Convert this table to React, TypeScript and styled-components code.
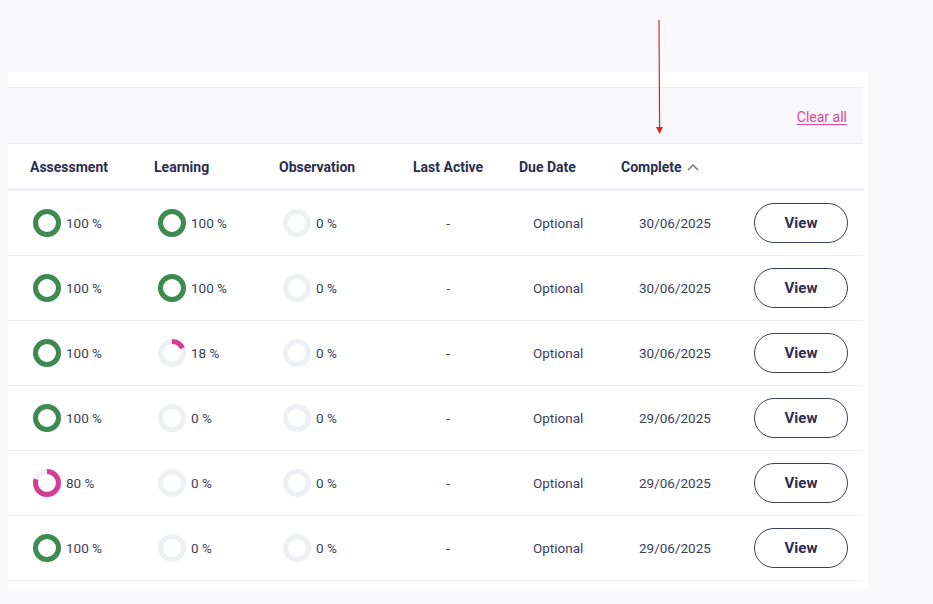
import React from "react";
import styled, { createGlobalStyle } from "styled-components";

const GlobalStyle = createGlobalStyle`
  html, body { margin: 0; padding: 0; }
  body {
    background: #fafafc;
    font-family: Roboto, "Liberation Sans", sans-serif;
    color: #2b2d52;
  }
`;

const Page = styled.div`
  position: relative;
  padding: 72px 0 0 8px;
  min-height: 604px;
  box-sizing: border-box;
`;

const Card = styled.div`
  width: 860px;
  background: #ffffff;
  padding: 15px 5px 8px 0;
  box-sizing: border-box;
`;

const FilterBar = styled.div`
  height: 57px;
  box-sizing: border-box;
  background: #f8f8fa;
  border-top: 1px solid #ececf0;
  border-bottom: 1px solid #ececf0;
  display: flex;
  align-items: center;
  justify-content: flex-end;
  padding: 2px 16px 0 0;
`;

const ClearAll = styled.a`
  color: #e0449a;
  font-size: 14px;
  text-decoration: underline;
  text-underline-offset: 2px;
  cursor: pointer;
`;

const cols = "124px 125px 134px 106px 102px 132px 132px";

const HeaderRow = styled.div`
  display: grid;
  grid-template-columns: ${cols};
  height: 47px;
  box-sizing: border-box;
  border-bottom: 3px solid #eef0f4;
  align-items: center;
  padding-top: 1px;
`;

const HeadCell = styled.div<{ $pl: number }>`
  padding-left: ${(p) => p.$pl}px;
  font-size: 14px;
  font-weight: 700;
  color: #2b2d52;
  display: flex;
  align-items: center;
  gap: 5px;
  white-space: nowrap;
`;

const Row = styled.div`
  display: grid;
  grid-template-columns: ${cols};
  height: 65px;
  box-sizing: border-box;
  border-bottom: 1px solid #ececf0;
  align-items: center;
`;

const Cell = styled.div<{ $pl: number }>`
  padding-left: ${(p) => p.$pl}px;
  font-size: 13.5px;
  color: #3b3d5c;
  display: flex;
  align-items: center;
  gap: 5px;
  white-space: nowrap;
`;

const CenterCell = styled(Cell)`
  justify-content: center;
`;

const ViewButton = styled.button`
  width: 94px;
  height: 40px;
  border: 1px solid #3b3d5c;
  border-radius: 20px;
  background: #fff;
  font-family: Roboto, "Liberation Sans", sans-serif;
  font-size: 15px;
  font-weight: 700;
  color: #2b2d52;
  cursor: pointer;
`;

const ArrowSvg = styled.svg`
  position: absolute;
  left: 652px;
  top: 18px;
`;

const Ring: React.FC<{ pct: number }> = ({ pct }) => {
  const r = 11.5;
  const c = 2 * Math.PI * r;
  const color = pct >= 100 ? "#3d8a52" : "#d63c96";
  return (
    <svg width="28" height="28" viewBox="0 0 28 28">
      <circle cx="14" cy="14" r={r} fill="none" stroke="#eef0f4" strokeWidth="5" />
      {pct > 0 && (
        <circle
          cx="14"
          cy="14"
          r={r}
          fill="none"
          stroke={color}
          strokeWidth="5"
          strokeDasharray={`${(c * pct) / 100} ${c}`}
          transform="rotate(-90 14 14)"
        />
      )}
    </svg>
  );
};

const Chevron = () => (
  <svg width="12" height="8" viewBox="0 0 12 8">
    <path d="M1 7 L6 2 L11 7" fill="none" stroke="#6a6c85" strokeWidth="1.4" />
  </svg>
);

const rows = [
  { a: 100, l: 100, o: 0, date: "30/06/2025" },
  { a: 100, l: 100, o: 0, date: "30/06/2025" },
  { a: 100, l: 18, o: 0, date: "30/06/2025" },
  { a: 100, l: 0, o: 0, date: "29/06/2025" },
  { a: 80, l: 0, o: 0, date: "29/06/2025" },
  { a: 100, l: 0, o: 0, date: "29/06/2025" },
];

export default function App() {
  return (
    <>
      <GlobalStyle />
      <Page>
        <Card>
          <FilterBar>
            <ClearAll>Clear all</ClearAll>
          </FilterBar>
          <HeaderRow>
            <HeadCell $pl={22}>Assessment</HeadCell>
            <HeadCell $pl={22}>Learning</HeadCell>
            <HeadCell $pl={22}>Observation</HeadCell>
            <HeadCell $pl={22}>Last Active</HeadCell>
            <HeadCell $pl={22}>Due Date</HeadCell>
            <HeadCell $pl={22}>
              Complete <Chevron />
            </HeadCell>
            <HeadCell $pl={0}></HeadCell>
          </HeaderRow>
          {rows.map((r, i) => (
            <Row key={i}>
              <Cell $pl={25}>
                <Ring pct={r.a} />
                {r.a} %
              </Cell>
              <Cell $pl={26}>
                <Ring pct={r.l} />
                {r.l} %
              </Cell>
              <Cell $pl={26}>
                <Ring pct={r.o} />
                {r.o} %
              </Cell>
              <CenterCell $pl={8}>-</CenterCell>
              <Cell $pl={36}>Optional</Cell>
              <Cell $pl={40}>{r.date}</Cell>
              <Cell $pl={23}>
                <ViewButton>View</ViewButton>
              </Cell>
            </Row>
          ))}
        </Card>
        <ArrowSvg width="14" height="118" viewBox="0 0 14 118">
          <line x1="7" y1="2" x2="7.6" y2="110" stroke="#e02424" strokeWidth="1.2" />
          <path d="M4 109 L11 109 L7.6 116 Z" fill="#e02424" />
        </ArrowSvg>
      </Page>
    </>
  );
}
